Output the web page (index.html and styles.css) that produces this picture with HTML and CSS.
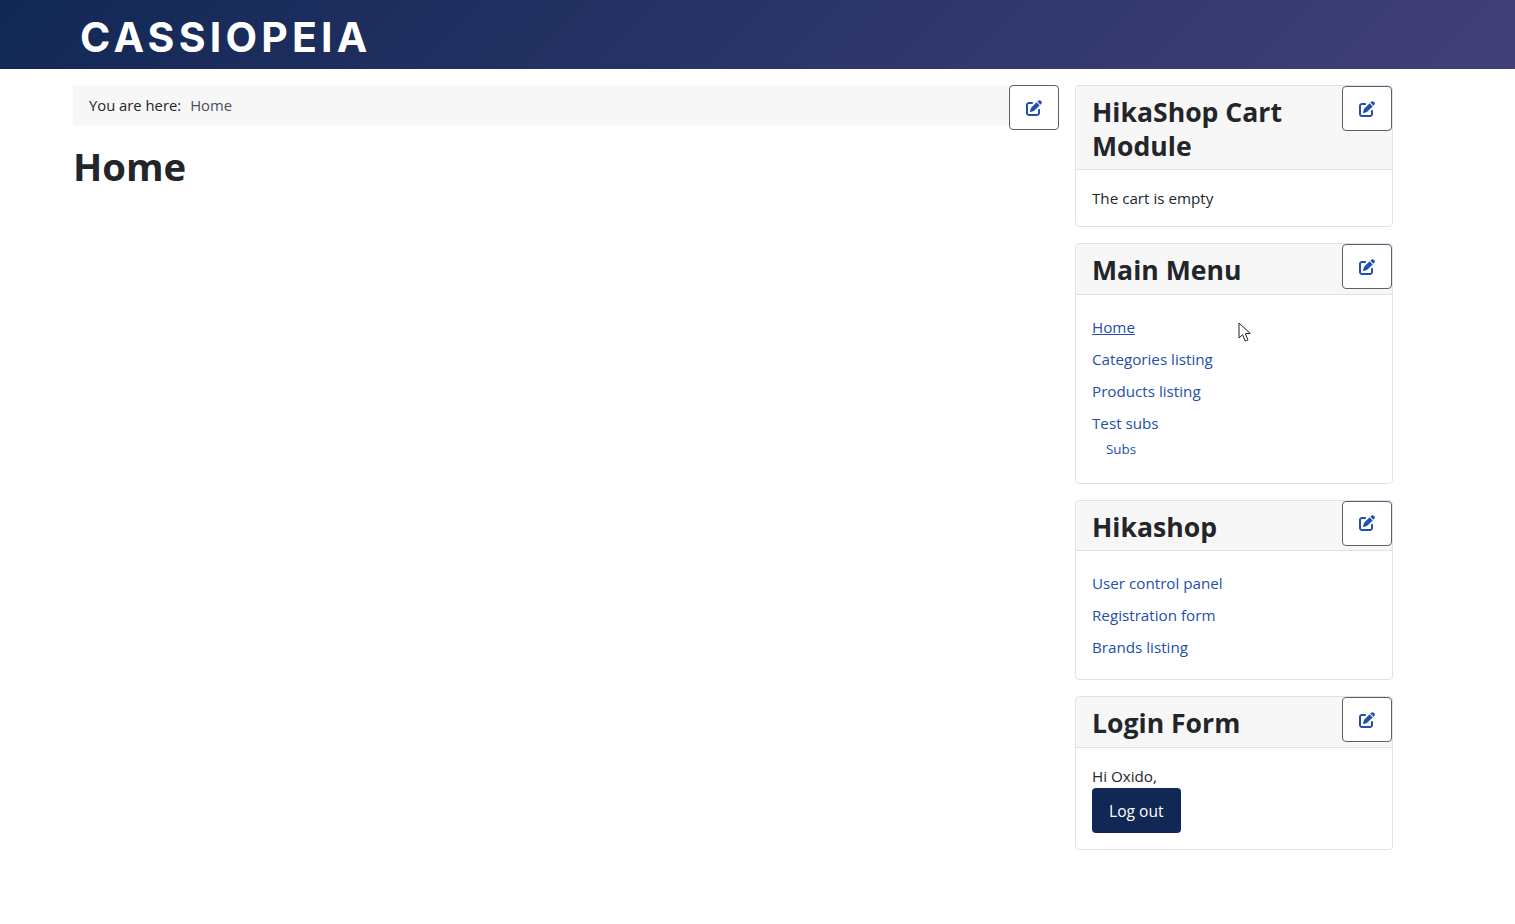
FILE: index.html
```html
<!DOCTYPE html>
<html lang="en">
<head>
    <meta charset="UTF-8">
    <title>Home</title>
    <link rel="stylesheet" href="styles.css">
</head>
<body>
    <header class="topbar">
        <a class="logo" href="#">CASSIOPEIA</a>
    </header>

    <div class="page">
        <main class="main">
            <div class="crumbs">
                <span class="crumbs-label">You are here:</span>
                <a href="#">Home</a>
                <a class="edit edit-crumbs" href="#"><svg viewBox="0 0 512 512"><use href="#pen"/></svg></a>
            </div>
            <h1>Home</h1>
        </main>

        <aside class="side">
            <section class="card">
                <a class="edit" href="#"><svg viewBox="0 0 512 512"><use href="#pen"/></svg></a>
                <h3 class="card-head card-head-wrap">HikaShop Cart<br>Module</h3>
                <div class="card-body">The cart is empty</div>
            </section>

            <section class="card">
                <a class="edit" href="#"><svg viewBox="0 0 512 512"><use href="#pen"/></svg></a>
                <h3 class="card-head">Main Menu</h3>
                <div class="card-body">
                    <ul class="menu">
                        <li><a class="current" href="#">Home</a></li>
                        <li><a href="#">Categories listing</a></li>
                        <li><a href="#">Products listing</a></li>
                        <li><a href="#">Test subs</a>
                            <ul class="submenu">
                                <li><a href="#">Subs</a></li>
                            </ul>
                        </li>
                    </ul>
                </div>
            </section>

            <section class="card">
                <a class="edit" href="#"><svg viewBox="0 0 512 512"><use href="#pen"/></svg></a>
                <h3 class="card-head">Hikashop</h3>
                <div class="card-body">
                    <ul class="menu">
                        <li><a href="#">User control panel</a></li>
                        <li><a href="#">Registration form</a></li>
                        <li><a href="#">Brands listing</a></li>
                    </ul>
                </div>
            </section>

            <section class="card">
                <a class="edit" href="#"><svg viewBox="0 0 512 512"><use href="#pen"/></svg></a>
                <h3 class="card-head">Login Form</h3>
                <div class="card-body">
                    <div>Hi Oxido,</div>
                    <button class="logout" type="button">Log out</button>
                </div>
            </section>
        </aside>
    </div>

    <!-- mouse pointer caught in the shot -->
    <svg class="pointer" viewBox="0 0 14 21" width="14" height="21">
        <path d="M1 1v15l3.6-3.3 2.6 6.3 2.8-1.2-2.7-6.1 4.9-.3z" fill="#fff" stroke="#222" stroke-width="1"/>
    </svg>

    <svg class="defs" width="0" height="0">
        <defs>
            <path id="pen" d="M471.6 21.7c-21.9-21.9-57.3-21.9-79.2 0L362.3 51.7l97.9 97.9 30.1-30.1c21.9-21.9 21.9-57.3 0-79.2L471.6 21.7zm-299.2 220c-6.1 6.1-10.8 13.6-13.5 21.9l-29.6 88.8c-2.9 8.6-.6 18.1 5.8 24.6s15.9 8.7 24.6 5.8l88.8-29.6c8.2-2.7 15.7-7.4 21.9-13.5L437.7 172.3 339.7 74.3 172.4 241.7zM96 64C43 64 0 107 0 160V416c0 53 43 96 96 96H352c53 0 96-43 96-96V320c0-17.7-14.3-32-32-32s-32 14.3-32 32v96c0 17.7-14.3 32-32 32H96c-17.7 0-32-14.3-32-32V160c0-17.7 14.3-32 32-32h96c17.7 0 32-14.3 32-32s-14.3-32-32-32H96z"/>
        </defs>
    </svg>
</body>
</html>
```

FILE: styles.css
```css
html, body {
    margin: 0;
    background-color: #fff;
}
body {
    font-family: "Open Sans", "Noto Sans", "Liberation Sans", sans-serif;
    font-size: 15.2px;
    line-height: 24px;
    color: #22262a;
}
a {
    color: #224faa;
    text-decoration: none;
}

/* top bar */
.topbar {
    height: 69px;
    box-sizing: border-box;
    padding: 5px 0 0 80px;
    display: flex;
    align-items: center;
    background: linear-gradient(135deg, #112855 0%, #424077 100%);
}
.logo {
    font-family: Inter, Lato, sans-serif;
    font-size: 41px;
    font-weight: 700;
    letter-spacing: 4.2px;
    line-height: 1;
    color: #fff;
}

/* columns */
.page {
    display: grid;
    grid-template-columns: 986px 318px;
    column-gap: 16px;
    padding: 16px 0 0 73px;
}
.main {
    min-width: 0;
}
.crumbs {
    position: relative;
    height: 40px;
    box-sizing: border-box;
    padding-left: 16px;
    display: flex;
    align-items: center;
    gap: 9px;
    font-size: 14.8px;
    background-color: #f7f7f7;
}
.crumbs a {
    color: #495057;
}
h1 {
    margin: 18px 0 0;
    font-size: 38.3px;
    line-height: 46px;
    font-weight: 700;
}

/* cards */
.side {
    display: flex;
    flex-direction: column;
    gap: 16px;
}
.card {
    position: relative;
    border: 1px solid #dfe3e7;
    border-radius: 4px;
    background-color: #fff;
}
.card-head {
    margin: 0;
    padding: 10px 16px 6px;
    font-size: 26.6px;
    line-height: 33.4px;
    font-weight: 700;
    background-color: #f7f7f7;
    border-bottom: 1px solid #dfe3e7;
    border-radius: 4px 4px 0 0;
}
.card-head-wrap {
    line-height: 33.6px;
}
.card-body {
    padding: 16px;
}

/* edit button on each module */
.edit {
    position: absolute;
    top: 0;
    right: 0;
    width: 50px;
    height: 45px;
    box-sizing: border-box;
    display: flex;
    align-items: center;
    justify-content: center;
    background-color: #fff;
    border: 1px solid #5b5e70;
    border-radius: 4px;
}
.edit svg {
    width: 16px;
    height: 16px;
    fill: #224faa;
}

/* menus */
.menu {
    list-style: none;
    margin: 0;
    padding: 0;
}
.menu > li {
    padding: 4px 0;
}
.current {
    text-decoration: underline;
}
.submenu {
    list-style: none;
    margin: 0;
    padding: 4px 0 3.2px 14px;
    font-size: 13.4px;
    line-height: 21px;
}

.logout {
    display: block;
    height: 45px;
    padding: 1px 17px 0;
    font-family: inherit;
    font-size: 15.6px;
    color: #fff;
    background-color: #112855;
    border: 0;
    border-radius: 4px;
}

.pointer {
    position: absolute;
    left: 1238px;
    top: 322px;
}
.defs {
    position: absolute;
}
```
